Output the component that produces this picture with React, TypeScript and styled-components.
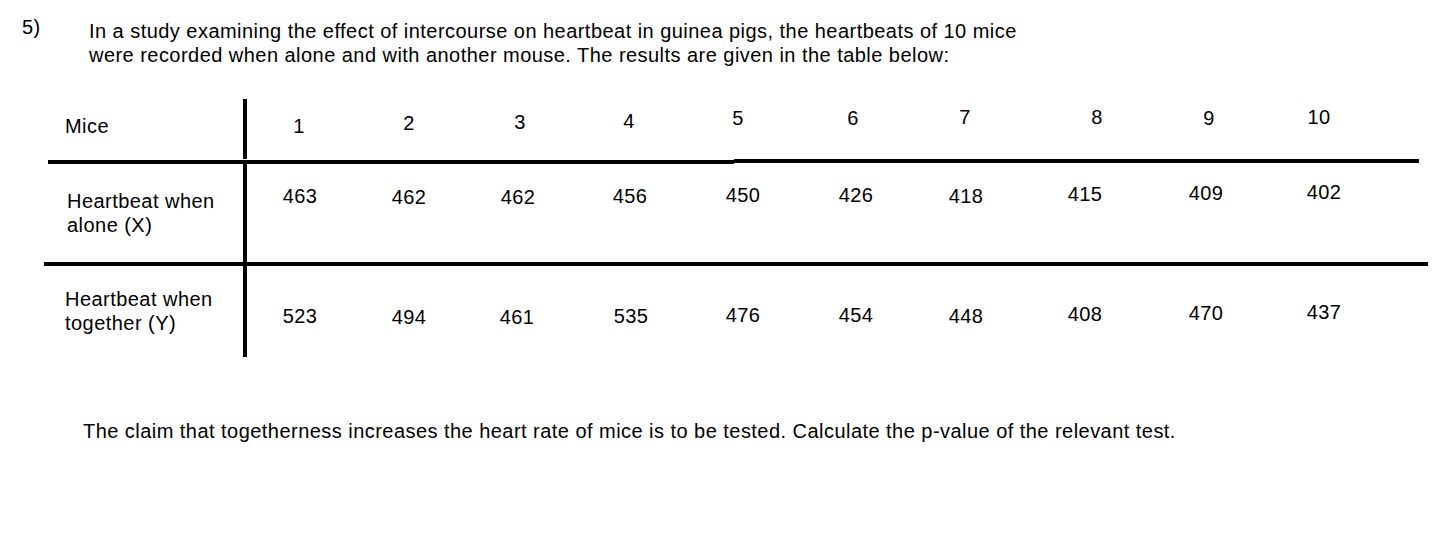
import React from "react";
import styled, { createGlobalStyle } from "styled-components";

const GlobalStyle = createGlobalStyle`
  body {
    margin: 0;
    background: #fff;
  }
`;

const Page = styled.div`
  width: 1455px;
  height: 536px;
  overflow: hidden;
  background: #fff;
  color: #000;
  font-family: "Liberation Sans", Arial, Helvetica, sans-serif;
  font-size: 20px;
  line-height: 24px;
  letter-spacing: 0.46px;
`;

const Question = styled.div`
  display: flex;
  padding-top: 15px;
`;

const QNumber = styled.span`
  width: 67px;
  padding-left: 22px;
`;

const QText = styled.p`
  margin: 4px 0 0;
`;

const Table = styled.div`
  display: flex;
  flex-direction: column;
  margin-top: 32px;
`;

const Row = styled.div<{ $height: number }>`
  display: flex;
  align-items: flex-start;
  height: ${({ $height }) => $height}px;
  padding-left: 48px;
`;

const Label = styled.div<{ $pad: number; $indent: number }>`
  box-sizing: border-box;
  width: 199px;
  height: 100%;
  flex-shrink: 0;
  padding-top: ${({ $pad }) => $pad}px;
  padding-left: ${({ $indent }) => $indent}px;
  border-right: 4px solid #000;
`;

const Cells = styled.div<{ $pad: number }>`
  display: grid;
  grid-template-columns: 106px 112px 106px 118px 104px 124px 98px 148px 88px 142px;
  padding-top: ${({ $pad }) => $pad}px;
`;

const Cell = styled.span<{ $dx: number; $dy: number }>`
  display: block;
  text-align: center;
  transform: translate(${({ $dx }) => $dx}px, ${({ $dy }) => $dy}px);
`;

const Rule = styled.div<{ $height: number }>`
  display: flex;
  align-items: flex-start;
  height: ${({ $height }) => $height}px;
`;

const Segment = styled.div<{ $from: number; $to: number; $top?: number }>`
  flex-shrink: 0;
  margin-left: ${({ $from }) => $from}px;
  margin-top: ${({ $top }) => $top || 0}px;
  width: ${({ $to, $from }) => $to - $from}px;
  height: 4px;
  background: #000;
`;

const Footer = styled.p`
  margin: 62px 0 0 83px;
`;

// column centres (px from page left), used to turn measured positions into offsets
const centres = [300, 409, 518, 630, 741, 855, 966, 1089, 1207, 1322];

type Row = { label: React.ReactNode; height: number; pad: number; indent: number; base: number; cells: [string, number, number][] };

const rows: Row[] = [
  {
    label: "Mice",
    height: 60,
    pad: 15,
    indent: 17,
    base: 125,
    cells: [
      ["1", 299, 125],
      ["2", 409, 122],
      ["3", 520, 121],
      ["4", 629, 120],
      ["5", 738, 117],
      ["6", 853, 117],
      ["7", 965, 116],
      ["8", 1097, 116],
      ["9", 1209, 117],
      ["10", 1319, 116],
    ],
  },
  {
    label: (
      <>
        Heartbeat when
        <br />
        alone (X)
      </>
    ),
    height: 98,
    pad: 25,
    indent: 19,
    base: 201,
    cells: [
      ["463", 300, 196],
      ["462", 409, 197],
      ["462", 518, 197],
      ["456", 630, 196],
      ["450", 743, 195],
      ["426", 856, 195],
      ["418", 966, 196],
      ["415", 1085, 194],
      ["409", 1206, 193],
      ["402", 1324, 192],
    ],
  },
  {
    label: (
      <>
        Heartbeat when
        <br />
        together (Y)
      </>
    ),
    height: 91,
    pad: 21,
    indent: 17,
    base: 299,
    cells: [
      ["523", 300, 316],
      ["494", 409, 317],
      ["461", 517, 317],
      ["535", 631, 316],
      ["476", 743, 315],
      ["454", 856, 315],
      ["448", 966, 316],
      ["408", 1085, 314],
      ["470", 1206, 313],
      ["437", 1324, 312],
    ],
  },
];

const DataRow = ({ row }: { row: Row }) => (
  <Row $height={row.height}>
    <Label $pad={row.pad} $indent={row.indent}>
      {row.label}
    </Label>
    <Cells $pad={row.pad}>
      {row.cells.map(([v, x, y], i) => (
        <Cell key={i} $dx={x - centres[i]} $dy={y - row.base}>
          {v}
        </Cell>
      ))}
    </Cells>
  </Row>
);

export default function App() {
  return (
    <Page>
      <GlobalStyle />
      <Question>
        <QNumber>5)</QNumber>
        <QText>
          In a study examining the effect of intercourse on heartbeat in guinea pigs, the heartbeats of 10 mice
          <br />
          were recorded when alone and with another mouse. The results are given in the table below:
        </QText>
      </Question>
      <Table>
        <DataRow row={rows[0]} />
        <Rule $height={5}>
          <Segment $from={48} $to={734} $top={1} />
          <Segment $from={0} $to={685} />
        </Rule>
        <DataRow row={rows[1]} />
        <Rule $height={4}>
          <Segment $from={44} $to={1428} />
        </Rule>
        <DataRow row={rows[2]} />
      </Table>
      <Footer>
        The claim that togetherness increases the heart rate of mice is to be tested. Calculate the p-value of the
        relevant test.
      </Footer>
    </Page>
  );
}
